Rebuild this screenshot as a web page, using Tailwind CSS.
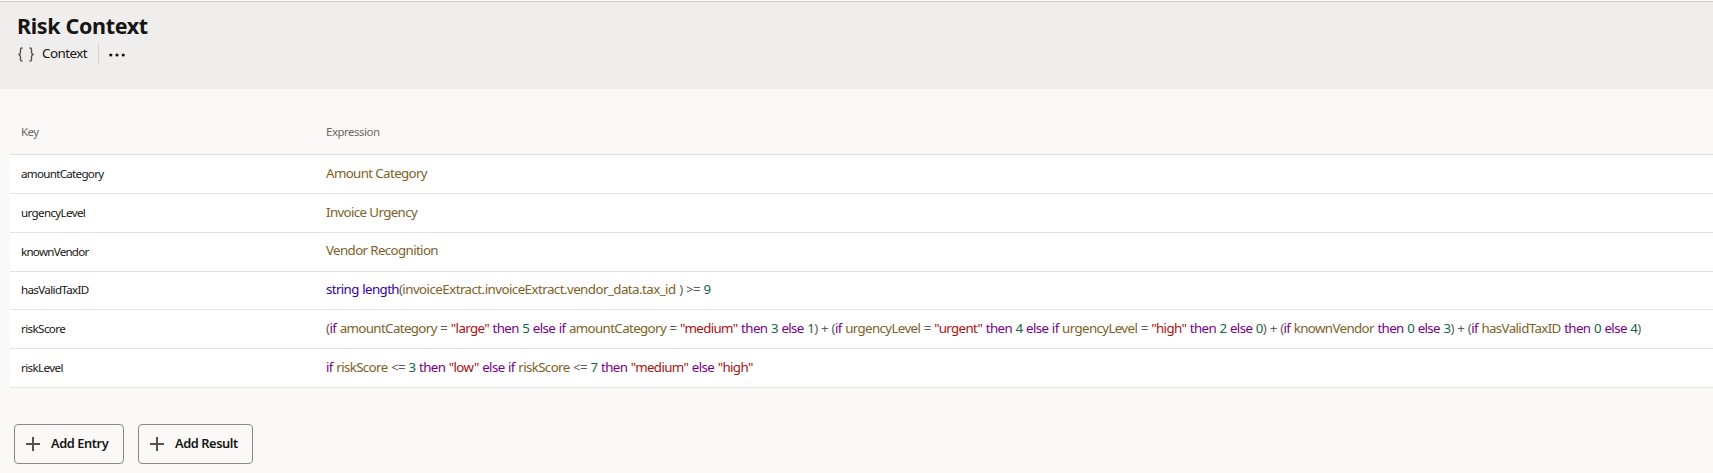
<!DOCTYPE html>
<html lang="en">
<head>
<meta charset="utf-8">
<title>Risk Context</title>
<script src="https://cdn.jsdelivr.net/npm/@tailwindcss/browser@4"></script>
</head>
<body class="h-[473px] overflow-hidden bg-[#fbf9f8] font-['Noto_Sans',sans-serif] text-[#161513]">
<header class="mt-px h-[88px] border-t border-[#cdcbc9] bg-[#f0eeed] pl-[17px] pt-[9px]">
  <h1 class="h-[30px] text-[21.5px] font-bold leading-[30px] tracking-[-0.35px]">Risk Context</h1>
  <div class="mt-[2px] flex h-[22px] items-center">
    <svg class="h-[15px] w-[17px]" viewBox="0 0 17 15" fill="none" stroke="#55524f" stroke-width="1.4"><path d="M5.500 1H4.900C3.800 1 3.500 1.500 3.500 2.600V5.200C3.500 6.500 2.900 7.200 1.600 7.500 2.900 7.800 3.500 8.500 3.500 9.800V12.400C3.500 13.500 3.800 14 4.900 14H5.500M12.500 1H13.100C14.200 1 14.500 1.500 14.500 2.600V5.200C14.500 6.500 15.100 7.200 16.400 7.500 15.100 7.800 14.500 8.500 14.500 9.800V12.400C14.500 13.500 14.200 14 13.100 14H12.500"/></svg>
    <span class="ml-2 w-[56px] whitespace-nowrap pb-[2px] text-[13.4px] leading-5 tracking-[-0.55px]">Context</span>
    <span class="h-[22px] w-px bg-[#d6d4d2]"></span>
    <svg class="ml-[10px] mt-[1px] h-4 w-4" viewBox="0 0 16 16" fill="#161513"><circle cx="1.800" cy="8" r="1.600"/><circle cx="8" cy="8" r="1.600"/><circle cx="14.200" cy="8" r="1.600"/></svg>
  </div>
</header>
<main>
  <div class="ml-[10px] mt-[28px] whitespace-nowrap text-[13.3px] leading-5 tracking-[-0.62px]">
    <div class="flex h-[38px] items-center border-b border-[#e0dfde] pb-[8px] text-[11.5px] tracking-[-0.5px] text-[#6b6966]"><span class="w-[305px] pl-[11px]">Key</span><span class="pl-[11px]">Expression</span></div>
    <div class="flex h-[39px] items-center border-b border-[#e4e3e2] bg-white"><span class="w-[305px] pl-[11px] text-[11.6px] tracking-[-0.7px]">amountCategory</span><span class="pb-[2px] pl-[11px] text-[#7d6127]">Amount Category</span></div>
    <div class="flex h-[39px] items-center border-b border-[#e4e3e2] bg-white"><span class="w-[305px] pl-[11px] text-[11.6px] tracking-[-0.65px]">urgencyLevel</span><span class="pb-[2px] pl-[11px] text-[#7d6127]">Invoice Urgency</span></div>
    <div class="flex h-[39px] items-center border-b border-[#e4e3e2] bg-white"><span class="w-[305px] pl-[11px] text-[11.6px] tracking-[-0.75px]">knownVendor</span><span class="pb-[4px] pl-[11px] text-[#7d6127]">Vendor Recognition</span></div>
    <div class="flex h-[38px] items-center border-b border-[#e4e3e2] bg-white"><span class="w-[305px] pb-[2px] pl-[11px] text-[11.6px] tracking-[-0.65px]">hasValidTaxID</span><span class="pb-[3px] pl-[11px] text-[#5f5c59] [word-spacing:0.7px]"><b class="font-normal text-[#30a]">string length</b>(<i class="not-italic tracking-[-0.54px] text-[#7d6127]">invoiceExtract.invoiceExtract.vendor_data.tax_id</i> ) &gt;= <u class="no-underline text-[#164]">9</u></span></div>
    <div class="flex h-[39px] items-center border-b border-[#e4e3e2] bg-white"><span class="w-[305px] pl-[11px] text-[11.6px] tracking-[-0.6px]">riskScore</span><span class="pb-[2px] pl-[11px] text-[#5f5c59] [word-spacing:0.65px]">(<b class="font-normal text-[#708]">if</b> <i class="not-italic text-[#7d6127]">amountCategory</i> = <s class="no-underline text-[#a11]">"large"</s> <b class="font-normal text-[#708]">then</b> <u class="no-underline text-[#164]">5</u> <b class="font-normal text-[#708]">else if</b> <i class="not-italic text-[#7d6127]">amountCategory</i> = <s class="no-underline text-[#a11]">"medium"</s> <b class="font-normal text-[#708]">then</b> <u class="no-underline text-[#164]">3</u> <b class="font-normal text-[#708]">else</b> <u class="no-underline text-[#164]">1</u>) + (<b class="font-normal text-[#708]">if</b> <i class="not-italic text-[#7d6127]">urgencyLevel</i> = <s class="no-underline text-[#a11]">"urgent"</s> <b class="font-normal text-[#708]">then</b> <u class="no-underline text-[#164]">4</u> <b class="font-normal text-[#708]">else if</b> <i class="not-italic text-[#7d6127]">urgencyLevel</i> = <s class="no-underline text-[#a11]">"high"</s> <b class="font-normal text-[#708]">then</b> <u class="no-underline text-[#164]">2</u> <b class="font-normal text-[#708]">else</b> <u class="no-underline text-[#164]">0</u>) + (<b class="font-normal text-[#708]">if</b> <i class="not-italic text-[#7d6127]">knownVendor</i> <b class="font-normal text-[#708]">then</b> <u class="no-underline text-[#164]">0</u> <b class="font-normal text-[#708]">else</b> <u class="no-underline text-[#164]">3</u>) + (<b class="font-normal text-[#708]">if</b> <i class="not-italic text-[#7d6127]">hasValidTaxID</i> <b class="font-normal text-[#708]">then</b> <u class="no-underline text-[#164]">0</u> <b class="font-normal text-[#708]">else</b> <u class="no-underline text-[#164]">4</u>)</span></div>
    <div class="flex h-[39px] items-center border-b border-[#e4e3e2] bg-white"><span class="w-[305px] pl-[11px] text-[11.6px] tracking-[-0.6px]">riskLevel</span><span class="pb-[2px] pl-[11px] text-[#5f5c59] [word-spacing:0.65px]"><b class="font-normal text-[#708]">if</b> <i class="not-italic text-[#7d6127]">riskScore</i> &lt;= <u class="no-underline text-[#164]">3</u> <b class="font-normal text-[#708]">then</b> <s class="no-underline text-[#a11]">"low"</s> <b class="font-normal text-[#708]">else if</b> <i class="not-italic text-[#7d6127]">riskScore</i> &lt;= <u class="no-underline text-[#164]">7</u> <b class="font-normal text-[#708]">then</b> <s class="no-underline text-[#a11]">"medium"</s> <b class="font-normal text-[#708]">else</b> <s class="no-underline text-[#a11]">"high"</s></span></div>
  </div>
  <div class="ml-[14px] mt-[36px] flex gap-[14px] whitespace-nowrap text-[12.8px] font-semibold tracking-[-0.42px]">
    <button class="flex h-10 w-[110px] items-center rounded-[4px] border border-[#8b8985] pl-[11px]"><svg class="mr-[11px] h-[14px] w-[14px]" viewBox="0 0 14 14" stroke="#55524f" stroke-width="2"><path d="M7 0V14M0 7H14"/></svg>Add Entry</button>
    <button class="flex h-10 w-[115px] items-center rounded-[4px] border border-[#8b8985] pl-[11px]"><svg class="mr-[11px] h-[14px] w-[14px]" viewBox="0 0 14 14" stroke="#55524f" stroke-width="2"><path d="M7 0V14M0 7H14"/></svg>Add Result</button>
  </div>
</main>
</body>
</html>
